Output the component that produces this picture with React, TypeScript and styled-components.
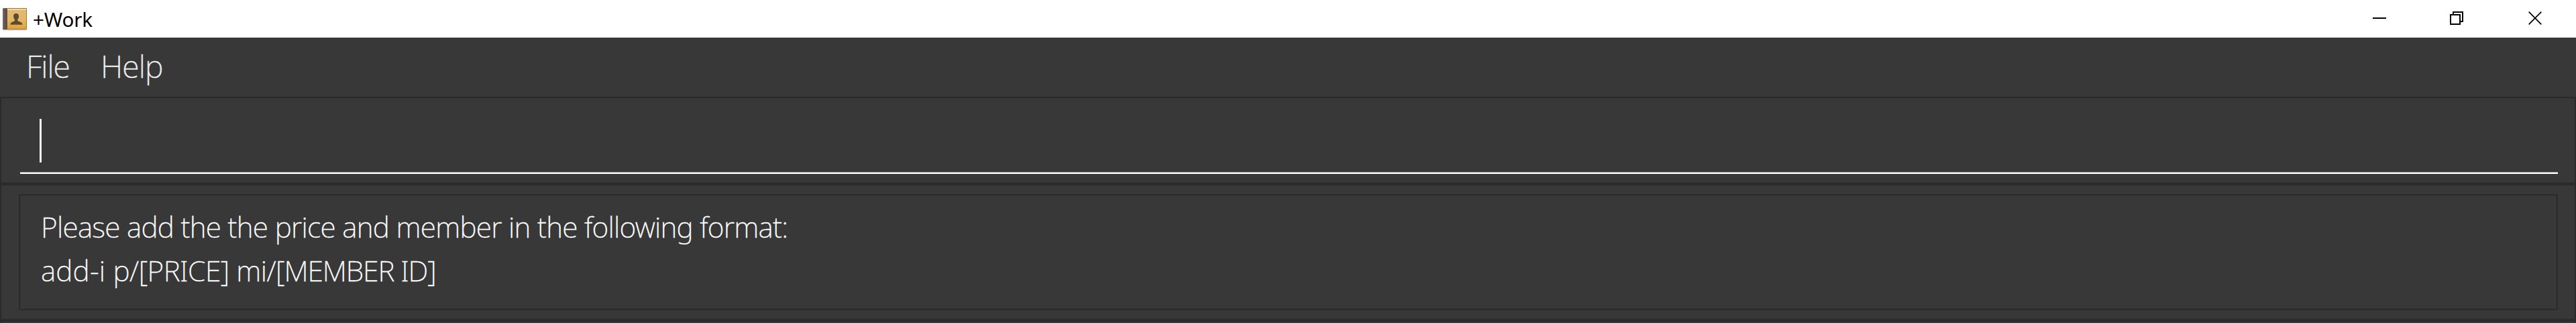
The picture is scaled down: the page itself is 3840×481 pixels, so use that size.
import React from "react";
import styled, { createGlobalStyle } from "styled-components";

const GlobalStyle = createGlobalStyle`
  * { box-sizing: border-box; }
  body { margin: 0; background: #383838; overflow: hidden; }
`;

const Window = styled.div`
  display: flex;
  flex-direction: column;
  width: 3840px;
  height: 481px;
  overflow: hidden;
  background: #383838;
  font-family: "Noto Sans", "Open Sans", sans-serif;
`;

const TitleBar = styled.header`
  display: flex;
  align-items: flex-start;
  height: 56px;
  flex: none;
  padding-right: 2px;
  background: #fff;
  color: #000;
`;

const AppIcon = styled.svg`
  width: 44px;
  height: 52px;
  flex: none;
`;

const Title = styled.h1`
  margin: 0 auto 0 5px;
  font-size: 29.5px;
  font-weight: 400;
  line-height: 58px;
  letter-spacing: -0.1px;
`;

const WindowButton = styled.button<{ $width: number }>`
  display: flex;
  width: ${(p) => p.$width}px;
  height: 54px;
  padding: 0;
  border: 0;
  background: none;
  align-items: center;
  justify-content: center;
`;

const Glyph = styled.svg`
  width: 20px;
  height: 20px;
  fill: none;
  stroke: #000;
`;

const MenuBar = styled.nav`
  display: flex;
  height: 88px;
  flex: none;
  padding-left: 39px;
  gap: 46px;
`;

const MenuItem = styled.span`
  color: #f0f0f0;
  font-size: 46.5px;
  font-weight: 200;
  line-height: 84px;
  letter-spacing: -0.9px;
  -webkit-text-stroke: 0.4px #f0f0f0;
`;

const Pane = styled.section<{ $height: number }>`
  height: ${(p) => p.$height}px;
  flex: none;
  border: 2px solid #2b2b2b;
  box-shadow: inset 0 0 0 1px #343434;
`;

const CommandPane = styled(Pane)`
  padding: 31px 25px 0 28px;
`;

const CommandField = styled.div`
  display: flex;
  height: 82px;
  padding-left: 29px;
  border-bottom: 2px solid #fff;
  box-shadow: inset 0 -1px 0 #9b9b9b;
`;

const Caret = styled.span`
  width: 3px;
  height: 65px;
  background: #f4f4f4;
`;

const ResultPane = styled(Pane)`
  padding: 13px 25px 0 26px;
`;

const ResultBox = styled.div`
  height: 173px;
  padding: 14px 0 0 31px;
  border: 2px solid #2b2b2b;
  box-shadow: inset 0 0 0 1px #343434;
`;

const ResultLine = styled.p`
  margin: 0;
  color: #fff;
  font-size: 42.5px;
  font-weight: 200;
  line-height: 65px;
  white-space: pre;
  letter-spacing: -0.71px;
  -webkit-text-stroke: 0.35px #fff;
`;

const Token = styled.span<{ $tracking: number }>`
  letter-spacing: ${(p) => p.$tracking}px;
`;

function AddressBookIcon() {
  return (
    <AppIcon viewBox="0 0 44 52">
      <defs>
        <linearGradient id="cover" x1="0" y1="0" x2="0" y2="1">
          <stop offset="0" stopColor="#dfb878" />
          <stop offset="0.5" stopColor="#e3b86c" />
          <stop offset="1" stopColor="#d9a343" />
        </linearGradient>
        <linearGradient id="spine" x1="0" y1="0" x2="1" y2="0">
          <stop offset="0" stopColor="#766863" />
          <stop offset="0.7" stopColor="#5a4d49" />
          <stop offset="1" stopColor="#6f5533" />
        </linearGradient>
      </defs>
      <rect x="4" y="43" width="36" height="2.5" rx="1" fill="#d4d4d4" />
      <rect x="4" y="12" width="36" height="32" rx="1" fill="#a97624" />
      <rect x="11" y="13" width="28" height="30" fill="url(#cover)" />
      <rect x="5" y="13.3" width="34" height="1.5" fill="#f3e3c4" />
      <rect x="4" y="12.5" width="7" height="31.5" rx="1" fill="url(#spine)" />
      <path d="M24 20c3 0 4.300 2 4 5-.2 2-1 3.300-1.700 4.200v1.800l5 2.200c1.400.7 2 1.500 2 3.500H15.500c0-2 .6-2.800 2-3.500l4.500-2.200v-1.800c-1-.9-1.700-2.200-1.900-4.200-.3-3 1-5 3.900-5z" fill="#5f4a2a" />
    </AppIcon>
  );
}

export default function App() {
  return (
    <Window>
      <GlobalStyle />
      <TitleBar>
        <AddressBookIcon />
        <Title>+Work</Title>
        <WindowButton $width={114} aria-label="Minimize">
          <Glyph viewBox="0 0 20 20"><path d="M0 10H20" strokeWidth="2" /></Glyph>
        </WindowButton>
        <WindowButton $width={116} aria-label="Restore">
          <Glyph viewBox="0 0 20 20"><path d="M1 5H15V19H1ZM5 5V1H19V15H15" strokeWidth="2" /></Glyph>
        </WindowButton>
        <WindowButton $width={118} aria-label="Close">
          <Glyph viewBox="0 0 20 20"><path d="M.7.7 19.300 19.300M19.300.7.7 19.300" strokeWidth="1.700" /></Glyph>
        </WindowButton>
      </TitleBar>
      <MenuBar>
        <MenuItem>File</MenuItem>
        <MenuItem>Help</MenuItem>
      </MenuBar>
      <CommandPane $height={130}>
        <CommandField><Caret /></CommandField>
      </CommandPane>
      <ResultPane $height={203}>
        <ResultBox>
          <ResultLine>Please add the the price and member in the following format:</ResultLine>
          <ResultLine>
            <Token $tracking={0.2}>add-i </Token>
            <Token $tracking={-0.5}>p/[PRICE] mi/</Token>
            <Token $tracking={-1.1}>[MEMBER ID]</Token>
          </ResultLine>
        </ResultBox>
      </ResultPane>
      <Pane $height={20} />
    </Window>
  );
}
